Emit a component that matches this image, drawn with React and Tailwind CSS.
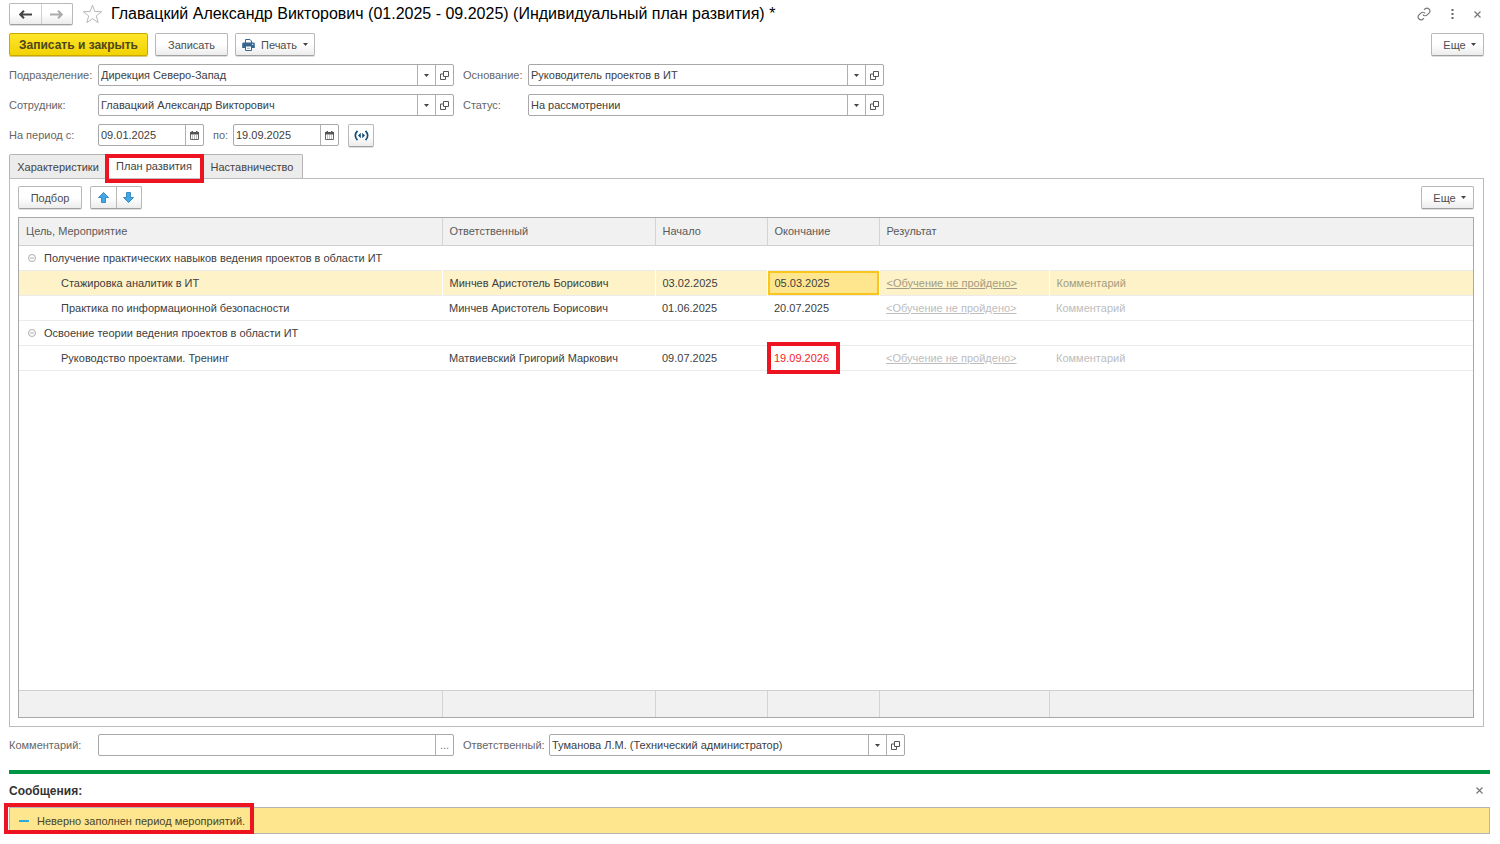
import { useState } from "react";

const goals = [
  {
    title: "Получение практических навыков ведения проектов в области ИТ",
    events: [
      {
        name: "Стажировка аналитик в ИТ",
        person: "Минчев Аристотель Борисович",
        start: "03.02.2025",
        end: "05.03.2025",
        selected: true,
      },
      {
        name: "Практика по информационной безопасности",
        person: "Минчев Аристотель Борисович",
        start: "01.06.2025",
        end: "20.07.2025",
      },
    ],
  },
  {
    title: "Освоение теории ведения проектов в области ИТ",
    events: [
      {
        name: "Руководство проектами. Тренинг",
        person: "Матвиевский Григорий Маркович",
        start: "09.07.2025",
        end: "19.09.2026",
        invalid: true,
      },
    ],
  },
];

const buttonStyle =
  "flex items-center justify-center rounded-[2px] border border-[#b8b8b8] border-b-[#a0a0a0] bg-linear-to-b from-white from-50% to-[#ececec] text-[#4d4d4d] shadow-[0_1px_0_#dedede]";

const Caret = () => (
  <svg width="5" height="3" viewBox="0 0 5 3" fill="#444">
    <path d="M0 0h5L2.5 3z" />
  </svg>
);

const OpenIcon = () => (
  <svg width="9" height="9" viewBox="0 0 9 9" fill="none" stroke="#555">
    <path d="M3.500.5h5v5h-5z" />
    <path d="M3 3H.5v5.500h5V6" />
  </svg>
);

const CalendarIcon = () => (
  <svg width="9" height="9" viewBox="0 0 9 9">
    <path d="M.5 1.500h8v7h-8z" fill="#fff" stroke="#666" />
    <path d="M0 1h9v2.500H0zM1.500 0h1.500v2H1.500zM6 0h1.500v2H6z" fill="#555" />
    <path d="M2 5h5M2 7h5" stroke="#888" strokeDasharray="1 1" />
  </svg>
);

const CloseIcon = () => (
  <svg width="7" height="7" viewBox="0 0 7 7" stroke="#777" strokeWidth="1.2">
    <path d="M.5.5l6 6M6.500.5l-6 6" />
  </svg>
);

const NavArrow = ({ color, flip }) => (
  <svg width="13" height="9" viewBox="0 0 13 9" fill="none" stroke={color} strokeWidth="2">
    <path d={flip ? "M0 4.500h11.500M8 .8l3.800 3.700L8 8.200" : "M13 4.500H1.500M5 .8L1.200 4.500 5 8.200"} />
  </svg>
);

const MoveArrow = ({ down }) => (
  <svg width="11" height="11" viewBox="0 0 11 11" fill="#3fa9e8" stroke="#2579b5" strokeWidth="0.8">
    <path d={down ? "M3.500.5h4v5h3l-5 5-5-5h3z" : "M3.500 10.500h4v-5h3l-5-5-5 5h3z"} />
  </svg>
);

const PrinterIcon = () => (
  <svg width="13" height="12" viewBox="0 0 13 12">
    <path d="M3.500 4V.5h4.500L9.500 2v2" fill="#fff" stroke="#35668f" />
    <path d="M1.500 3.500h10a1.300 1.300 0 011.300 1.300V9H.2V4.800a1.300 1.300 0 011.300-1.300z" fill="#35668f" />
    <path d="M3.500 7h6v4.500h-6z" fill="#fff" stroke="#35668f" />
    <path d="M5 9.300h3" stroke="#8fb0ca" />
    <path d="M10 5.300h1.300" stroke="#fff" />
  </svg>
);

const MoreButton = () => (
  <button className={`${buttonStyle} h-[23px] w-[53px] gap-[5px] pl-1`}>
    Еще <Caret />
  </button>
);

// Text box with its lookup buttons on the right
const Field = ({ id, label, labelWidth, value, kind = "ref", width = "w-[356px]" }) => {
  const [text, setText] = useState(value);
  const side = "flex w-[18px] items-center justify-center border-l border-[#b0b0b0]";

  return (
    <div className="flex items-center">
      <label htmlFor={id} className={`${labelWidth} shrink-0 whitespace-nowrap text-[#666]`}>
        {label}
      </label>
      <div className={`${width} flex h-[22px] rounded-[2px] border border-[#a8a8a8] bg-white`}>
        <input
          id={id}
          value={text}
          onChange={(e) => setText(e.target.value)}
          className="w-full min-w-0 flex-1 px-[2px] text-[#404040] outline-none"
        />
        {kind === "ref" && (
          <>
            <button aria-label="Выбрать" className={side}><Caret /></button>
            <button aria-label="Открыть" className={side}><OpenIcon /></button>
          </>
        )}
        {kind === "date" && (
          <button aria-label="Календарь" className={side}><CalendarIcon /></button>
        )}
        {kind === "text" && (
          <button aria-label="Редактировать" className={`${side} text-[#777]`}>...</button>
        )}
      </div>
    </div>
  );
};

const GoalRows = ({ goal }) => {
  const [open, setOpen] = useState(true);

  return (
    <>
      <tr className="h-[25px] border-b border-[#ebebeb]">
        <td colSpan={6} className="pl-[9px]">
          <div className="flex items-center gap-2">
            <button aria-label="Свернуть" onClick={() => setOpen(!open)}>
              <svg width="8" height="8" viewBox="0 0 8 8" fill="none" stroke="#999" strokeWidth="0.8">
                <circle cx="4" cy="4" r="3.500" />
                <path d="M2 4h4" />
              </svg>
            </button>
            {goal.title}
          </div>
        </td>
      </tr>
      {open && goal.events.map((ev) => (
        <tr
          key={ev.name}
          className={`h-[25px] border-b border-[#ebebeb] ${ev.selected ? "bg-[#fef2c8]" : ""}`}
        >
          <td className={`pl-[42px] ${ev.selected ? "border-r border-white" : ""}`}>{ev.name}</td>
          <td className={`pl-[7px] ${ev.selected ? "border-r border-white" : ""}`}>{ev.person}</td>
          <td className={`pl-[7px] ${ev.selected ? "border-r border-white" : ""}`}>{ev.start}</td>
          <td
            className={`pl-[7px] ${
              ev.selected ? "border-r border-white bg-[#fee68f] inset-ring-2 inset-ring-[#fac51c]" : ""
            }`}
          >
            {ev.invalid ? (
              <span className="relative text-[#f81c24]">
                {ev.end}
                <span className="absolute -top-[10px] -right-[11px] -bottom-[10px] -left-[7px] border-4 border-[#ee1320]" />
              </span>
            ) : (
              ev.end
            )}
          </td>
          <td className={`pl-[7px] ${ev.selected ? "border-r border-white" : ""}`}>
            <a href="#" className={`underline ${ev.selected ? "text-[#a49c82]" : "text-[#bdbdbd]"}`}>
              &lt;Обучение не пройдено&gt;
            </a>
          </td>
          <td className={`pl-[7px] ${ev.selected ? "text-[#a49c82]" : "text-[#bdbdbd]"}`}>
            Комментарий
          </td>
        </tr>
      ))}
    </>
  );
};

const PlanTable = () => (
  <div className="flex flex-1 flex-col border border-[#a8a8a8]">
    <table className="w-full table-fixed border-collapse text-left text-[#404040]">
      <colgroup>
        <col className="w-[423px]" />
        <col className="w-[213px]" />
        <col className="w-[112px]" />
        <col className="w-[112px]" />
        <col className="w-[170px]" />
        <col />
      </colgroup>
      <thead>
        <tr className="h-[27px] border-b border-[#d0d0d0] bg-[#f1f1f1] text-[#5a5a5a]">
          <th className="border-r border-[#d4d4d4] pl-[7px] font-normal">Цель, Мероприятие</th>
          <th className="border-r border-[#d4d4d4] pl-[7px] font-normal">Ответственный</th>
          <th className="border-r border-[#d4d4d4] pl-[7px] font-normal">Начало</th>
          <th className="border-r border-[#d4d4d4] pl-[7px] font-normal">Окончание</th>
          <th colSpan={2} className="pl-[7px] font-normal">Результат</th>
        </tr>
      </thead>
      <tbody>
        {goals.map((goal) => (
          <GoalRows key={goal.title} goal={goal} />
        ))}
      </tbody>
    </table>
    <div className="flex-1" />
    <div className="grid h-[27px] grid-cols-[424px_213px_112px_112px_170px_1fr] divide-x divide-[#d4d4d4] border-t border-[#d0d0d0] bg-[#f1f1f1]">
      <div />
      <div />
      <div />
      <div />
      <div />
      <div />
    </div>
  </div>
);

const App = () => {
  const [showMessages, setShowMessages] = useState(true);

  return (
    <div className="flex min-h-screen flex-col bg-white pt-[3px] pr-[10px] pb-[10px] pl-[9px] font-['Liberation_Sans',Arial,sans-serif] text-[11px] leading-4">
      <header className="flex h-[22px] items-center pr-[9px]">
        <div className={`${buttonStyle} h-[22px] w-16`}>
          <button aria-label="Назад" className="flex h-full flex-1 items-center justify-center border-r border-[#d0d0d0]">
            <NavArrow color="#444" />
          </button>
          <button aria-label="Вперед" className="flex h-full flex-1 items-center justify-center">
            <NavArrow color="#aaa" flip />
          </button>
        </div>
        <button aria-label="Избранное" className="ml-[9px]">
          <svg width="21" height="20" viewBox="0 0 21 20" fill="#fff" stroke="#b4b8bc" strokeWidth="1">
            <path d="M10.500 1.200l2.300 6.300 6.900.2-5.400 4.200 1.900 6.700-5.700-3.900-5.700 3.900 1.900-6.700L1.300 7.700l6.900-.2z" />
          </svg>
        </button>
        <h1 className="ml-2 flex-1 text-[16px] leading-5 whitespace-nowrap text-black">
          Главацкий Александр Викторович (01.2025 - 09.2025) (Индивидуальный план развития) *
        </h1>
        <div className="flex items-center gap-5">
          <button aria-label="Ссылка">
            <svg width="14" height="14" viewBox="0 0 24 24" fill="none" stroke="#777" strokeWidth="2">
              <path d="M10 13a5 5 0 007.500.5l3.500-3.500a5 5 0 00-7-7l-2 2" />
              <path d="M14 11a5 5 0 00-7.500-.5L3 14a5 5 0 007 7l2-2" />
            </svg>
          </button>
          <button aria-label="Меню">
            <svg width="3" height="10" viewBox="0 0 3 10" fill="#666">
              <path d="M.5 0h2v2h-2zM.5 4h2v2h-2zM.5 8h2v2h-2z" />
            </svg>
          </button>
          <button aria-label="Закрыть"><CloseIcon /></button>
        </div>
      </header>

      <div className="mt-2 flex gap-[7px] pr-[6px]">
        <button className="h-[23px] w-[139px] rounded-[2px] border border-[#c9a800] bg-linear-to-b from-[#ffe627] to-[#f2d200] text-[12px] font-bold text-[#4d4719] shadow-[0_1px_0_#d8ca80]">
          Записать и закрыть
        </button>
        <button className={`${buttonStyle} h-[23px] w-[73px]`}>Записать</button>
        <button className={`${buttonStyle} h-[23px] w-20 gap-[6px]`}>
          <PrinterIcon /> Печать <Caret />
        </button>
        <div className="ml-auto">
          <MoreButton />
        </div>
      </div>

      <div className="mt-2 flex flex-col gap-2">
        <div className="flex gap-[9px]">
          <Field id="department" label="Подразделение:" labelWidth="w-[89px]" value="Дирекция Северо-Запад" />
          <Field id="basis" label="Основание:" labelWidth="w-[65px]" value="Руководитель проектов в ИТ" />
        </div>
        <div className="flex gap-[9px]">
          <Field id="employee" label="Сотрудник:" labelWidth="w-[89px]" value="Главацкий Александр Викторович" />
          <Field id="status" label="Статус:" labelWidth="w-[65px]" value="На рассмотрении" />
        </div>
        <div className="flex h-[22px] items-center gap-[9px]">
          <Field id="from" kind="date" width="w-[106px]" label="На период с:" labelWidth="w-[89px]" value="09.01.2025" />
          <Field id="to" kind="date" width="w-[106px]" label="по:" labelWidth="w-5" value="19.09.2025" />
          <button aria-label="Выбрать период" className={`${buttonStyle} h-[23px] w-[26px]`}>
            <svg width="15" height="11" viewBox="0 0 15 11" fill="none" stroke="#164a72" strokeWidth="1.700">
              <path d="M3.500.8C.6 3.500.6 7.500 3.500 10.200M11.500.8c2.900 2.700 2.900 6.700 0 9.400" />
              <path d="M6.800 2.800v5.400L4 5.500zM8.200 2.800v5.400L11 5.500z" fill="#164a72" stroke="none" />
            </svg>
          </button>
        </div>
      </div>

      <div role="tablist" className="mt-2 flex h-6 text-[#444]">
        <button role="tab" className="w-[98px] rounded-tl-[2px] border border-b-0 border-[#b4b4b4] bg-[#ececec]">
          Характеристики
        </button>
        <button role="tab" aria-selected="true" className="relative w-[94px] bg-white">
          План развития
          <span className="absolute top-0 -right-[3px] -bottom-[5px] -left-[2px] border-4 border-[#ee1320]" />
        </button>
        <button role="tab" className="w-[102px] rounded-tr-[2px] border border-b-0 border-[#b4b4b4] bg-[#ececec]">
          Наставничество
        </button>
      </div>

      <main className="mr-[6px] flex flex-1 flex-col border border-[#bcbcbc] pt-[7px] pr-[9px] pb-2 pl-2">
        <div className="mb-2 flex gap-2">
          <button className={`${buttonStyle} h-[23px] w-16`}>Подбор</button>
          <div className={`${buttonStyle} h-[23px] w-[52px]`}>
            <button aria-label="Вверх" className="flex h-full flex-1 items-center justify-center border-r border-[#b8b8b8]">
              <MoveArrow />
            </button>
            <button aria-label="Вниз" className="flex h-full flex-1 items-center justify-center">
              <MoveArrow down />
            </button>
          </div>
          <div className="ml-auto">
            <MoreButton />
          </div>
        </div>
        <PlanTable />
      </main>

      <div className="mt-[7px] flex gap-[9px]">
        <Field id="comment" kind="text" label="Комментарий:" labelWidth="w-[89px]" value="" />
        <Field
          id="responsible"
          label="Ответственный:"
          labelWidth="w-[86px]"
          value="Туманова Л.М. (Технический администратор)"
        />
      </div>

      {showMessages && (
        <section className="mt-[14px] border-t-4 border-[#009646]">
          <div className="flex h-[33px] items-center justify-between pr-[7px]">
            <h2 className="text-[12px] font-bold text-[#333]">Сообщения:</h2>
            <button aria-label="Закрыть сообщения" onClick={() => setShowMessages(false)}>
              <CloseIcon />
            </button>
          </div>
          <div className="relative flex h-[27px] items-center gap-2 border border-[#b4b4b4] bg-[#fee68f] pl-[9px] text-[#4a4428]">
            <span className="h-[2px] w-[10px] bg-[#29abe2]" />
            <span>Неверно заполнен период мероприятий.</span>
            <span className="absolute -top-[5px] -bottom-px -left-[6px] w-[250px] border-4 border-[#ee1320]" />
          </div>
        </section>
      )}
    </div>
  );
};

export default App;
